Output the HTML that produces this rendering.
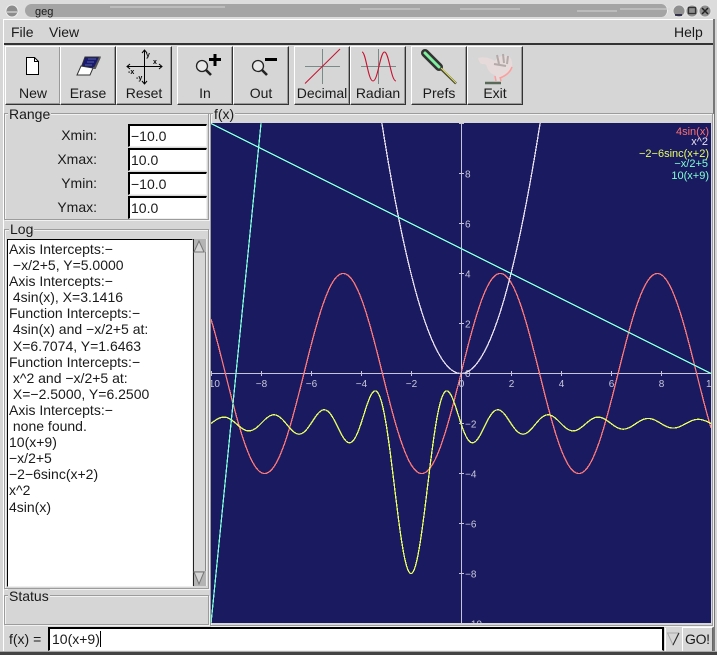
<!DOCTYPE html>
<html><head><meta charset="utf-8"><title>geg</title>
<style>
html,body{margin:0;padding:0;background:#d6d6d6}
body{width:717px;height:655px;position:relative;overflow:hidden;font-family:"Liberation Sans",sans-serif;font-size:14px;color:#1a1a1a}
.a{position:absolute;white-space:pre;line-height:16px}
.btn{position:absolute;top:46px;width:54px;height:57px;background:#d6d6d6;border:1px solid;border-color:#fff #333 #333 #fff;box-shadow:inset -1px -1px 0 #999;text-align:center;box-sizing:content-box}
.btn span{position:absolute;left:-3px;right:-3px;top:38px;line-height:16px}
.fr{position:absolute;border:1px solid #9c9c9c;box-shadow:inset 1px 1px 0 #f2f2f2,1px 1px 0 #f2f2f2}
.lb{position:absolute;background:#d6d6d6;line-height:14px;padding:0 1px}
.in{position:absolute;left:128px;width:76px;height:20px;background:#fff;border-top:2px solid #000;border-left:2px solid #000;border-right:1px solid #eee;border-bottom:1px solid #eee;box-sizing:content-box;line-height:20px;padding-left:0;text-indent:1px}
</style></head><body>
<!-- window edges -->
<div style="position:absolute;left:0;top:0;width:717px;height:19px;background:#dcdcdc"></div>
<div style="position:absolute;left:713px;top:19px;width:2px;height:636px;background:#777"></div>
<div style="position:absolute;left:3px;top:19px;width:1px;height:636px;background:#fff"></div>
<div style="position:absolute;left:25px;top:4px;width:642px;height:13px;background:#a4a4a4;border-radius:7px;border-right:1px solid #eee"></div>
<div class="a" style="left:35px;top:6px;font-size:11px;line-height:13px">geg</div>
<!-- menu -->
<div style="position:absolute;left:4px;top:19px;width:709px;height:23px;border-top:1px solid #fff;border-bottom:2px solid #333"></div>
<div class="a" style="left:11px;top:24px">File</div>
<div class="a" style="left:49px;top:24px">View</div>
<div class="a" style="left:674px;top:24px">Help</div>
<!-- toolbar -->
<div class="btn" style="left:5px"><span>New</span></div>
<div class="btn" style="left:60px"><span>Erase</span></div>
<div class="btn" style="left:116px"><span>Reset</span></div>
<div class="btn" style="left:177px"><span>In</span></div>
<div class="btn" style="left:233px"><span>Out</span></div>
<div class="btn" style="left:294px"><span>Decimal</span></div>
<div class="btn" style="left:350px"><span>Radian</span></div>
<div class="btn" style="left:411px"><span>Prefs</span></div>
<div class="btn" style="left:467px"><span>Exit</span></div>
<div style="position:absolute;left:4px;top:113px;width:709px;height:1px;background:#9c9c9c"></div>
<!-- range -->
<div class="fr" style="left:4px;top:113px;width:203px;height:105px"></div>
<div class="lb" style="left:8px;top:107px">Range</div>
<div class="a" style="left:20px;width:77px;text-align:right;top:127px">Xmin:</div>
<div class="a" style="left:20px;width:77px;text-align:right;top:151px">Xmax:</div>
<div class="a" style="left:20px;width:77px;text-align:right;top:175px">Ymin:</div>
<div class="a" style="left:20px;width:77px;text-align:right;top:199px">Ymax:</div>
<div class="in" style="top:124px">−10.0</div>
<div class="in" style="top:148px">10.0</div>
<div class="in" style="top:172px">−10.0</div>
<div class="in" style="top:196px">10.0</div>
<!-- log -->
<div class="fr" style="left:4px;top:229px;width:203px;height:358px"></div>
<div class="lb" style="left:9px;top:222px">Log</div>
<div style="position:absolute;left:7px;top:239px;width:184px;height:346px;background:#fff;border-top:1px solid #000;border-left:1px solid #000;border-right:1px solid #eee;border-bottom:1px solid #eee;overflow:hidden">
<div class="a" style="left:1px;top:1px;line-height:16.1px">Axis Intercepts:−
 −x/2+5, Y=5.0000
Axis Intercepts:−
 4sin(x), X=3.1416
Function Intercepts:−
 4sin(x) and −x/2+5 at:
 X=6.7074, Y=1.6463
Function Intercepts:−
 x^2 and −x/2+5 at:
 X=−2.5000, Y=6.2500
Axis Intercepts:−
 none found.
10(x+9)
−x/2+5
−2−6sinc(x+2)
x^2
4sin(x)</div></div>
<!-- scrollbar -->
<div style="position:absolute;left:193px;top:239px;width:12px;height:347px;background:#b4b4b4;border-left:1px solid #222;border-right:1px solid #eee"></div>
<div style="position:absolute;left:194px;top:252px;width:11px;height:319px;background:#d6d6d6;border-right:1px solid #888"></div>
<!-- status -->
<div class="fr" style="left:4px;top:595px;width:203px;height:28px"></div>
<div class="lb" style="left:8px;top:589px">Status</div>
<!-- f(x) frame -->
<div class="fr" style="left:210px;top:113px;width:501px;height:511px"></div>
<div class="lb" style="left:213px;top:107px">f(x)</div>
<!-- bottom -->
<div class="a" style="left:9px;top:631px">f(x) =</div>
<div style="position:absolute;left:48px;top:627px;width:612px;height:21px;background:#fff;border-top:2px solid #000;border-left:2px solid #000;border-right:2px solid #000;border-bottom:1px solid #eee"></div>
<div class="a" style="left:52px;top:631px">10(x+9)<span style="display:inline-block;width:1px;height:16px;background:#000;vertical-align:top"></span></div>
<div style="position:absolute;left:665px;top:628px;width:16px;height:23px;background:#d6d6d6;border-left:1px solid #fff"></div>
<div style="position:absolute;left:682px;top:627px;width:29px;height:23px;background:#d6d6d6;border:1px solid;border-color:#fff #666 #666 #fff"></div>
<div class="a" style="left:685px;top:631px;letter-spacing:-.3px">GO!</div>
<div style="position:absolute;left:0;top:652px;width:717px;height:3px;background:#444"></div>
<div style="position:absolute;left:0;top:651px;width:717px;height:1px;background:#aaa"></div>

<svg id="s" width="717" height="655" viewBox="0 0 717 655" style="position:absolute;left:0;top:0" xmlns="http://www.w3.org/2000/svg">
<defs><clipPath id="c"><rect x="211" y="123" width="500" height="500"/></clipPath></defs>
<!-- title bar widgets -->
<circle cx="12" cy="11" r="6" fill="#8c8c8c" stroke="#eee"/>
<path d="M7 12h10" stroke="#bbb" stroke-width="2"/>
<g fill="#8f8f8f" stroke="#e4e4e4"><circle cx="679" cy="11" r="6"/><circle cx="692" cy="11" r="6"/><circle cx="705" cy="11" r="6"/></g>
<path d="M675 15h7" stroke="#113" stroke-width="1.5"/><rect x="688.500" y="7.500" width="7" height="6" fill="none" stroke="#333" stroke-width="1.300"/><path d="M702 8l6 6M708 8l-6 6" stroke="#222" stroke-width="1.500"/>
<path d="M110 7h115M360 9h60M460 9h60M577 11h40M620 9h50" stroke="#d4d4d4"/>
<!-- scroll arrows -->
<path d="M199 241l-5 11h10z" fill="#d6d6d6" stroke="#777"/>
<path d="M199 584l-5 -12h10z" fill="#d6d6d6" stroke="#777"/>
<path d="M667.500 633l5.500 12 5.500-12z" fill="none" stroke="#a8a8a8"/><path d="M673 645l6-12" stroke="#222"/>
<!-- New -->
<path d="M26.500 57.500h8l4 4v13h-12z" fill="#fff" stroke="#000"/><path d="M34.500 57.500v4h4" fill="none" stroke="#000"/>
<!-- Erase -->
<path d="M85 57h15l-6 11h-13z" fill="#1a1a70" stroke="#333"/>
<path d="M88 59h8M87 62h7M85 65h7" stroke="#5560a0"/>
<path d="M81 66l12 2-3 7h-13z" fill="#fff" stroke="#333"/><path d="M93 68l2 0 5-11" fill="none" stroke="#555" stroke-width="2"/>
<!-- Reset -->
<path d="M144.500 50v34M127 66.500h35" stroke="#000" fill="none"/>
<path d="M142 53l2.500-3 2.500 3M142 81l2.500 3 2.500-3M130 64l-3 2.500 3 2.500M159 64l3 2.500-3 2.500" stroke="#000" fill="none"/>
<g font-family="Liberation Sans,sans-serif" font-size="7" font-weight="bold"><text x="146" y="57">y</text><text x="153" y="64">x</text><text x="128" y="74">-x</text><text x="136" y="80">-y</text></g>
<!-- In -->
<circle cx="202" cy="66" r="5.500" fill="#e8e8e8" stroke="#222" stroke-width="1.300"/><path d="M206 70l5 5" stroke="#222" stroke-width="2.600"/>
<path d="M209 59.500h12M215 54v12" stroke="#000" stroke-width="3"/>
<!-- Out -->
<circle cx="258" cy="66" r="5.500" fill="#e8e8e8" stroke="#222" stroke-width="1.300"/><path d="M262 70l5 5" stroke="#222" stroke-width="2.600"/>
<path d="M265 59.500h12" stroke="#000" stroke-width="3"/>
<!-- Decimal -->
<path d="M305 66.500h35M322.500 49v35" stroke="#7a8a88"/><path d="M305 83.500L340 49" stroke="#c81030"/>
<!-- Radian -->
<path d="M361 66.500h35M378.500 49v35" stroke="#7a8a88"/>
<path d="M362 52C366 52 368 81 373 81S380 52 384.500 52S391 81 396 81" fill="none" stroke="#c81030" stroke-width="1.100"/>
<!-- Prefs -->
<path d="M425 53l14 14" stroke="#333" stroke-width="8" stroke-linecap="round"/>
<path d="M425 53l14 14" stroke="#80f0a0" stroke-width="3" stroke-linecap="round"/>
<path d="M440 68l16 15.500" stroke="#444" stroke-width="2.500"/><path d="M441 68l15 15" stroke="#e0e040" stroke-width="1"/>
<!-- Exit -->
<path d="M478 58c6-2 12 0 17 3 2-5 11-7 15-4 3 4 3 11-1 14-3 3-7 5-9 6l1 4h-5l-1-6c-4-1-7-4-8-8-1-3-2-3-5-3-2 0-3-3-4-6z" fill="#e6dada"/>
<path d="M497 55l2 9M503 54l1 9M508 56l-1 8M494 64l12 2" stroke="#b4aaaa" stroke-width="2" fill="none"/>
<path d="M512 67c-2 6-7 9-12 11M495 76l1 5M500 77l1 4" stroke="#ff9c9c" stroke-width="1.500" fill="none"/>
<path d="M485 83h16" stroke="#5a6a5a" stroke-width="2.500"/>
<!-- plot -->
<rect x="211" y="123" width="500" height="500" fill="#1a1a60"/>
<g clip-path="url(#c)" id="p" shape-rendering="crispEdges" fill="none">
<path d="M211 373.500H711M461.500 123V623" stroke="#c6c6d8"/>
</g>
<g clip-path="url(#c)" id="l" font-family="Liberation Sans,sans-serif" font-size="10" fill="#c8c8dc"></g>
<g font-family="Liberation Sans,sans-serif" font-size="11" text-anchor="end">
<text x="709" y="135" fill="#ff7070">4sin(x)</text>
<text x="708" y="145" fill="#e8e0f0">x^2</text>
<text x="709" y="157" fill="#e8ff60">−2−6sinc(x+2)</text>
<text x="708" y="167" fill="#80ffd0">−x/2+5</text>
<text x="709" y="179" fill="#80ffd0">10(x+9)</text>
</g>
</svg>
<script>
(function(){
var ns="http://www.w3.org/2000/svg",p=document.getElementById("p"),l=document.getElementById("l");
function sinc(x){x*=Math.PI;return Math.abs(x)<1e-9?1:Math.sin(x)/x}
function plot(f,col){
var pts=[];
for(var i=0;i<=2000;i++){var x=-10+i/100,y=f(x);var py=373.5-25*y;
if(py<-200||py>1000)continue;pts.push((211+(x+10)*25).toFixed(2)+","+py.toFixed(2));}
var e=document.createElementNS(ns,"polyline");e.setAttribute("points",pts.join(" "));e.setAttribute("stroke",col);e.setAttribute("stroke-width","1.3");p.appendChild(e);}
plot(function(x){return 4*Math.sin(x)},"#ff7878");
plot(function(x){return x*x},"#e8e0f0");
plot(function(x){return -2-6*sinc(x+2)},"#e8ff60");
plot(function(x){return -x/2+5},"#80ffd8");
plot(function(x){return 10*(x+9)},"#80ffd8");
function t(x,y,s,a){var e=document.createElementNS(ns,"text");e.setAttribute("x",x);e.setAttribute("y",y);if(a)e.setAttribute("text-anchor",a);e.textContent=s;l.appendChild(e);}
for(var v=-10;v<=10;v+=2){
var px=461.5+v*25,py=373.5-v*25;
var tk=document.createElementNS(ns,"path");
tk.setAttribute("d","M"+px+" 371v5M459 "+py+"h5");tk.setAttribute("stroke","#c6c6d8");p.appendChild(tk);
t(px,387,(v<0?"−":"")+Math.abs(v),"middle");
if(v!==0&&v!==10)t(465,py+4,(v<0?"−":"")+Math.abs(v));
}
t(465,377,"0");
})();
</script>
</body></html>
